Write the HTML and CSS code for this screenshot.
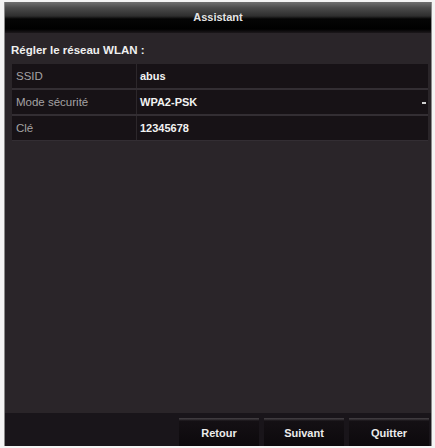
FILE: index.html
```html
<!DOCTYPE html>
<html lang="fr">
<head>
<meta charset="utf-8">
<title>Assistant</title>
<link rel="stylesheet" href="styles.css">
</head>
<body>
<div class="frame">
  <div class="titlebar">Assistant</div>
  <div class="content">
    <div class="heading">Régler le réseau WLAN :</div>
    <div class="table">
      <div class="row">
        <div class="label">SSID</div>
        <div class="value">abus</div>
      </div>
      <div class="row">
        <div class="label">Mode sécurité</div>
        <div class="value">WPA2-PSK<span class="arrow"></span></div>
      </div>
      <div class="row">
        <div class="label">Clé</div>
        <div class="value">12345678</div>
      </div>
    </div>
  </div>
  <div class="footer">
    <div class="btn">Retour</div>
    <div class="btn">Suivant</div>
    <div class="btn">Quitter</div>
  </div>
</div>
</body>
</html>
```
FILE: styles.css
```css
html, body {
  margin: 0;
  padding: 0;
  background: #f4f4f4;
}
body {
  width: 435px;
  height: 448px;
  padding: 2px 3px 2px 4px;
  box-sizing: border-box;
  font-family: "Liberation Sans", Arial, sans-serif;
}
.frame {
  width: 428px;
  height: 444px;
  background: #2a2529;
  display: flex;
  flex-direction: column;
  border-left: 1px solid #8a8a8a;
  border-right: 1px solid #8a8a8a;
  box-sizing: border-box;
}
.titlebar {
  height: 31px;
  background: linear-gradient(#707070 0, #4a4a4a 6px, #2e2e2e 14px, #050505 17px, #000 27px, #1c181b 31px);
  color: #e4e4e4;
  font-size: 11px;
  font-weight: bold;
  text-align: center;
  line-height: 12px;
  padding-top: 9px;
  box-sizing: border-box;
}
.content {
  flex: 1;
  padding: 10px 0 0 6px;
}
.heading {
  color: #f0f0f0;
  font-size: 11.5px;
  font-weight: bold;
  height: 14px;
  line-height: 14px;
}
.table {
  margin: 7px 0 0 1px;
  width: 416px;
  display: flex;
  flex-direction: column;
  gap: 2px;
  padding: 0 0 1px 0;
  background: #332e33;
}
.row {
  display: flex;
  height: 24px;
  background: #171216;
}
.label {
  width: 120px;
  padding-left: 4px;
  color: #a5a2a4;
  font-size: 11.5px;
  line-height: 24px;
  border-right: 1px solid #2c272b;
}
.value {
  flex: 1;
  position: relative;
  padding-left: 3px;
  color: #f2f2f2;
  font-size: 11px;
  font-weight: bold;
  line-height: 24px;
}
.arrow {
  position: absolute;
  right: 2px;
  top: 12px;
  width: 4px;
  height: 2px;
  background: #d0d0d0;
}
.footer {
  height: 33px;
  background: #19151a;
  display: flex;
  justify-content: flex-end;
  gap: 5px;
  padding: 5px 2px 0 0;
  box-sizing: border-box;
}
.btn {
  width: 80px;
  background: linear-gradient(#444044 0, #3a363a 1px, #141014 3px, #0c090c);
  color: #ececec;
  font-size: 11px;
  font-weight: bold;
  text-align: center;
  line-height: 30px;
}
```
